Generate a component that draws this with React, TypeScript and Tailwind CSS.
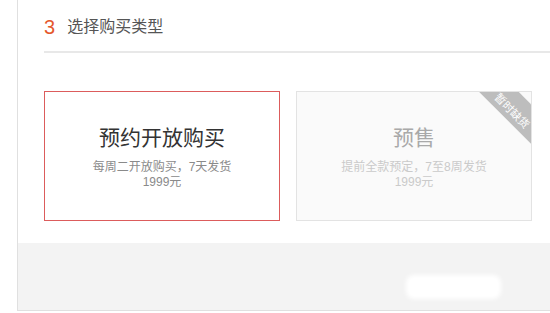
import React from "react";

const FONT = { fontFamily: '"Liberation Sans", "Noto Sans CJK SC", sans-serif' };

interface OptionCardProps {
  title: string;
  desc: string;
  price: string;
  selected?: boolean;
  soldOut?: boolean;
}

const OptionCard = ({ title, desc, price, selected, soldOut }: OptionCardProps) => (
  <div
    className={
      selected
        ? "relative w-[236px] h-[130px] shrink-0 overflow-hidden border border-[#dc5c5c] bg-white flex flex-col items-center pt-[32px]"
        : "relative w-[236px] h-[130px] shrink-0 overflow-hidden border border-[#e3e3e3] bg-[#fafafa] flex flex-col items-center pt-[32px]"
    }
  >
    <div
      className={
        soldOut
          ? "text-[21px] leading-[28px] text-[#a9a9a9]"
          : "text-[21px] leading-[28px] text-[#333]"
      }
    >
      {title}
    </div>
    <div
      className={
        soldOut
          ? "mt-[8px] text-[12px] leading-[15px] text-[#cacaca] text-center"
          : "mt-[8px] text-[12px] leading-[15px] text-[#8a8a8a] text-center"
      }
    >
      <div>{desc}</div>
      <div>{price}</div>
    </div>
    {soldOut && (
      <div className="absolute left-[168px] top-[2px] w-[100px] h-[28px] rotate-45 bg-[#bdbdbd] flex items-center justify-center">
        <span className="translate-y-[4px] text-white text-[11px] leading-none">暂时缺货</span>
      </div>
    )}
  </div>
);

export default function App() {
  return (
    <div className="w-[550px] h-[313px] bg-white overflow-hidden" style={FONT}>
      <div className="ml-[17px] w-[600px] border-l border-b border-[#e0e0e0]">
        <div className="pl-[26px]">
          <div className="h-[51px] flex items-center pt-[2px]">
            <span className="text-[20px] leading-none text-[#e5582c]">3</span>
            <span className="ml-[12px] text-[16px] leading-none text-[#555]">选择购买类型</span>
          </div>
          <div className="h-[2px] bg-[#e8e8e8]" />
          <div className="mt-[38px] flex gap-[16px]">
            <OptionCard
              title="预约开放购买"
              desc="每周二开放购买，7天发货"
              price="1999元"
              selected
            />
            <OptionCard
              title="预售"
              desc="提前全款预定，7至8周发货"
              price="1999元"
              soldOut
            />
          </div>
        </div>
        <div className="mt-[22px] h-[67px] bg-[#f3f3f3] pl-[388px] pt-[32px]">
          <div className="w-[95px] h-[24px] rounded-[8px] bg-white blur-[2px]" />
        </div>
      </div>
    </div>
  );
}
